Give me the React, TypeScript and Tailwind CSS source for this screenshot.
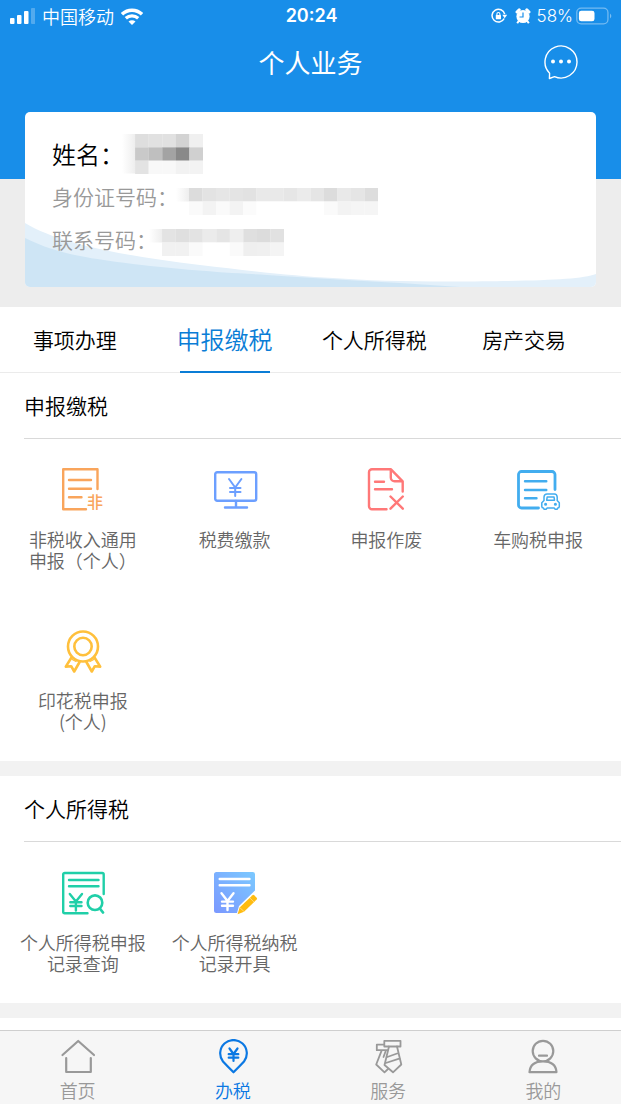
import type { ReactNode } from "react";

type Item = { label: string; icon: ReactNode };

const stroke = {
  fill: "none",
  strokeLinecap: "round" as const,
  strokeLinejoin: "round" as const,
};

function ServiceIcon({ color, width = 2.4, children }: { color: string; width?: number; children: ReactNode }) {
  return (
    <svg viewBox="0 0 44 44" className="h-11 w-11 overflow-visible" stroke={color} strokeWidth={width} {...stroke} aria-hidden="true">
      {children}
    </svg>
  );
}

const declarationItems: Item[] = [
  {
    label: "非税收入通用\n申报（个人）",
    icon: (
      <ServiceIcon color="#f9a55c">
        <path d="M36.5 22V2.3H2.2V42.2H25M8 13H30M8 21.7H30M8 30.3H20.5" />
        <text x="26" y="40.8" fontSize="16" fontWeight="500" fill="#f9a55c" stroke="none">
          非
        </text>
      </ServiceIcon>
    ),
  },
  {
    label: "税费缴款",
    icon: (
      <ServiceIcon color="#6c9fff">
        <rect x="2.2" y="5.2" width="41" height="28.5" rx="2" />
        <path d="M23 34V40M12 40.5H34" />
        <path d="M16 12 22.2 20.5 28.4 12M22.2 20.5V29M17 21H27.5M17 25H27.5" strokeWidth="2" />
      </ServiceIcon>
    ),
  },
  {
    label: "申报作废",
    icon: (
      <ServiceIcon color="#ff7878">
        <path d="M38.7 24.5V14.3L27 2.3H8a3 3 0 0 0-3 3V39.2a3 3 0 0 0 3 3H22.5M26.8 2.5V10.5a3.8 3.8 0 0 0 3.8 3.8H38.5M11 14.7H20M11 22.3H28" />
        <path d="M26.5 29.5 38.8 41.7M38.8 29.5 26.5 41.7" />
      </ServiceIcon>
    ),
  },
  {
    label: "车购税申报",
    icon: (
      <ServiceIcon color="#42adef">
        <path d="M39 22.5V7.5a3 3 0 0 0-3-3H5.5a3 3 0 0 0-3 3V38a3 3 0 0 0 3 3H22.5" strokeWidth="2.8" />
        <path d="M9 14.3H30.3M9 23H30.3M9 31.3H20.5" />
        <g strokeWidth="1.5">
          <path d="M28 33.5V30Q28.3 26.9 31 26.9H38.4Q41 26.9 41.2 30V33.5L43.3 35.7V39.5Q43.3 41 41.7 41.1L41.2 42.2H39L38.3 41.1H31L30.3 42.2H28L27.5 41.1Q25.8 41 25.8 39.5V35.7Z" />
          <path d="M30.7 33.2 31.2 29.9H38L38.5 33.2Z" />
          <circle cx="29.6" cy="37.2" r=".8" />
          <circle cx="39.4" cy="37.2" r=".8" />
        </g>
      </ServiceIcon>
    ),
  },
  {
    label: "印花税申报\n(个人)",
    icon: (
      <ServiceIcon color="#ffc03c" width={2.6}>
        <circle cx="22" cy="18.5" r="15" />
        <circle cx="22" cy="18.5" r="8.7" />
        <path d="M10.5 29.5 4.8 38.6 10.2 38.2 13.2 43.5 18.6 34M33.5 29.5 39.2 38.6 33.8 38.2 30.8 43.5 25.4 34" />
        <path d="M11.2 31.5 15 33.5M32.8 31.5 29 33.5" strokeWidth="1.3" />
      </ServiceIcon>
    ),
  },
];

const incomeItems: Item[] = [
  {
    label: "个人所得税申报\n记录查询",
    icon: (
      <ServiceIcon color="#20cfa8">
        <path d="M42.7 24V4.5a1.5 1.5 0 0 0-1.5-1.5H3.7a1.5 1.5 0 0 0-1.5 1.5V41.7a1.5 1.5 0 0 0 1.5 1.5H26.5M8 10H37.5M8 16.3H37.5" />
        <path d="M8.8 24 14.9 31.5 21 24M14.9 31.5V40.5M9.3 32.2H20.5M9.3 36H20.5" />
        <circle cx="34" cy="32.7" r="7.3" strokeWidth="2.6" />
        <path d="M38.8 38.5 42 42.5" strokeWidth="2.8" />
      </ServiceIcon>
    ),
  },
  {
    label: "个人所得税纳税\n记录开具",
    icon: (
      <ServiceIcon color="#ffffff">
        <defs>
          <linearGradient id="paper" x1="0" y1="1" x2="1" y2="0">
            <stop offset="0" stopColor="#7b98ff" />
            <stop offset="1" stopColor="#7bc9ff" />
          </linearGradient>
        </defs>
        <path d="M3.5 2H39.8a2.2 2.2 0 0 1 2.2 2.2V20.5L26 36 24 43H3.5A2.5 2.5 0 0 1 1 40.5V4.5A2.5 2.5 0 0 1 3.5 2Z" fill="url(#paper)" stroke="none" />
        <path d="M6.7 9H36.5M6.7 15.3H36.5M8.5 23.2 14.5 31 20.5 23.2M14.5 31V40M9 31.6H20M9 35.7H20" />
        <path d="M39.5 25.2Q40.3 24.5 41.1 25.2L43.7 27.8Q44.4 28.7 43.7 29.5L31 41.8 24.6 44.2 26.6 37.5Z" fill="#ffbc11" stroke="none" />
        <path d="M36.7 27.8 41.2 32.2M27 37.8 31 41.5" strokeWidth=".6" strokeOpacity=".7" />
      </ServiceIcon>
    ),
  },
];

const tabs = ["事项办理", "申报缴税", "个人所得税", "房产交易"];

const navItems: { label: string; icon: ReactNode }[] = [
  { label: "首页", icon: <path d="M2.5 16 18.2 2 34 16M6.2 19V33H30.8V19" /> },
  {
    label: "办税",
    icon: (
      <>
        <path d="M18.5 33.3Q12 26.8 8 22.5A13.3 13.3 0 1 1 29 22.5Q25 26.8 18.5 33.3Z" />
        <path d="M14.5 9.5 18.5 15 22.5 9.5M18.5 15V22M13.7 15.2H23.3M13.7 18.7H23.3" />
      </>
    ),
  },
  {
    label: "服务",
    icon: (
      <g strokeWidth="1.8">
        <path d="M14.3 1.8H30.5V7.5H14.3ZM14.3 5.7H6.8V11.2H17.5M11.8 11.2 6.2 25.5 14.5 33.3 18 30M16 11.2 13.5 18" />
        <path d="M19 7.5 14.5 26 23 33.3 31.3 25.5 27 7.5M17.3 18 28.5 14M15.8 24 30 19.3" />
      </g>
    ),
  },
  {
    label: "我的",
    icon: <path d="M18 1.8A10.3 10.3 0 1 1 18 22.4A10.3 10.3 0 1 1 18 1.8ZM14 16.7H22M4.5 33.2Q5.3 22.4 18 22.4T31.5 33.2Z" />,
  },
];

function Mosaic({ rows, className, lead }: { rows: string[][]; className: string; lead: string }) {
  const columns = rows[0].length;
  return (
    <svg viewBox={`-13 0 ${columns * 13.5 + 13} ${rows.length * 13.5}`} preserveAspectRatio="none" className={className} role="img" aria-label="已隐藏">
      <defs>
        <linearGradient id={lead}>
          <stop offset="0" stopColor="#eeeeee" stopOpacity="0" />
          <stop offset="1" stopColor="#eeeeee" />
        </linearGradient>
      </defs>
      <rect x="-13" y="0" width="13" height={rows.length > 2 ? 40 : 13.5} fill={`url(#${lead})`} />
      {rows.map((row, y) =>
        row.map((fill, x) => <rect key={`${x}-${y}`} x={x * 13.5} y={y * 13.5} width="13.6" height="13.6" fill={fill} />)
      )}
    </svg>
  );
}

const nameRows = [
  ["#dedede", "#e1e1e1", "#e1e1e1", "#d3d3d3", "#f0f0f0"],
  ["#c9c9c9", "#bfbfbf", "#a3a3a3", "#898989", "#d0d0d0"],
  ["#e3e3e3", "#f8f8f8", "#f8f8f8", "#f2f2f2", "#f3f3f3"],
];
const idRows = [
  ["#dcdcdc", "#e3e3e3", "#e6e6e6", "#e4e4e4", "#e2e2e2", "#e9e9e9", "#e9e9e9", "#e6e6e6", "#ebebeb", "#e5e5e5", "#dcdcdc", "#e9e9e9", "#e5e5e5", "#dddddd"],
  ["#fafafa", "#f3f3f3", "#fafafa", "#f3f3f3", "#fbfbfb", "#fff", "#fff", "#fff", "#fff", "#fff", "#fafafa", "#f3f3f3", "#f5f5f5", "#f5f5f5"],
];
const phoneRows = [
  ["#e3e3e3", "#dfdfdf", "#e3e3e3", "#ebebeb", "#e5e5e5", "#eeeeee", "#dfdfdf", "#dcdcdc", "#e1e1e1"],
  ["#f1f1f1", "#f1f1f1", "#fafafa", "#fff", "#fff", "#fafafa", "#efefef", "#f0f0f0", "#f4f4f4"],
];

function StatusBar() {
  return (
    <div className="grid h-8 grid-cols-[1fr_auto_1fr] items-center pr-2 pl-[10px] text-lg leading-8">
      <div className="flex items-center gap-[7px]">
        <svg viewBox="0 0 25 16" className="h-4 w-[25px]" fill="white" aria-hidden="true">
          <rect x="0" y="10" width="4.5" height="6" rx="1" />
          <rect x="7" y="7" width="4.5" height="9" rx="1" />
          <rect x="14" y="3" width="4.5" height="13" rx="1" />
          <rect x="21" y="0" width="4.3" height="16" rx="1" opacity=".25" />
        </svg>
        <span className="leading-[30px]">中国移动</span>
        <svg viewBox="0 0 22 17" className="h-[17px] w-[22px]" fill="none" stroke="white" strokeWidth="3.4" aria-hidden="true">
          <path d="M1 6.2A14.6 14.6 0 0 1 21 6.2M4.8 10.2A9.4 9.4 0 0 1 17.2 10.2" />
          <path d="M11 17 7.5 13.6A5 5 0 0 1 14.5 13.6Z" fill="white" stroke="none" />
        </svg>
      </div>
      <time className="font-[Inter,sans-serif] font-semibold">20:24</time>
      <div className="flex items-center justify-end">
        <svg viewBox="0 0 16 16" className="mr-2 h-4 w-4" fill="none" stroke="white" strokeWidth="1.5" aria-hidden="true">
          <path d="M13.2 10.5A6.4 6.4 0 1 1 13.7 6.2" />
          <path d="M11.3 6.8H16.2L13.7 10.2Z" fill="white" stroke="none" />
          <rect x="4.8" y="7" width="5.2" height="4.3" rx=".5" fill="white" stroke="none" />
          <path d="M5.9 7.5V6a1.5 1.5 0 0 1 3 0V7.5" strokeWidth="1.1" />
        </svg>
        <svg viewBox="0 0 16 16" className="mr-[6px] h-4 w-4" aria-hidden="true">
          <circle cx="8" cy="8.5" r="6.6" fill="white" />
          <path d="M2 4 4.2 1.8M11.8 1.8 14 4" stroke="white" strokeWidth="3" strokeLinecap="round" />
          <path d="M3.7 13 2.2 15.2M12.3 13 13.8 15.2" stroke="white" strokeWidth="2" />
          <path d="M8 4.5V9H4.5" fill="none" stroke="#188ee9" strokeWidth="1.2" />
        </svg>
        <span className="font-[Inter,sans-serif] text-[17px]">58%</span>
        <svg viewBox="0 0 38 18" className="ml-[3px] h-[18px] w-[37px]" fill="none" aria-hidden="true">
          <rect x=".8" y="1" width="32" height="16" rx="4.5" stroke="white" strokeOpacity=".4" strokeWidth="1.3" />
          <rect x="3" y="3.5" width="16" height="11" rx="2.5" fill="white" />
          <path d="M35 6.5Q37.5 9 35 11.5Z" fill="white" fillOpacity=".45" />
        </svg>
      </div>
    </div>
  );
}

function ProfileCard() {
  return (
    <section className="relative mx-[25px] mt-5 h-[175px] overflow-hidden rounded-[5px] bg-white px-[27px] pt-[22px]">
      <svg viewBox="0 0 571 175" preserveAspectRatio="none" className="absolute inset-0 h-full w-full" aria-hidden="true">
        <path d="M0 111C35 132 95 143 175 153C225 159 270 164 308 166Q355 169.5 425 169.5C510 169 555 168 571 162V175H0Z" fill="#e3f0fa" />
        <path d="M0 126C30 141 60 146 108 152C160 158 190 160 242 163Q300 167 375 171L435 175H0Z" fill="#cee5f5" />
      </svg>
      <dl className="relative">
        <div className="flex h-10 items-center text-2xl text-black">
          <dt>姓名：</dt>
          <dd className="-ml-[2px]">
            <Mosaic rows={nameRows} lead="leadName" className="h-10 w-[81px]" />
          </dd>
        </div>
        <div className="flex h-[46px] items-center text-[21px] text-[#999]">
          <dt>身份证号码：</dt>
          <dd className="mt-2 -ml-[2px]">
            <Mosaic rows={idRows} lead="leadId" className="h-[27px] w-[202px]" />
          </dd>
        </div>
        <div className="flex h-[40px] items-center text-[21px] text-[#999]">
          <dt>联系号码：</dt>
          <dd className="mt-1 -ml-2">
            <Mosaic rows={phoneRows} lead="leadPhone" className="h-[27px] w-[135px]" />
          </dd>
        </div>
      </dl>
    </section>
  );
}

function ServiceSection({ title, items }: { title: string; items: Item[] }) {
  return (
    <section className="bg-white">
      <h2 className="ml-6 h-[66px] border-b border-[#d9d9d9] text-[21px] leading-[65px] font-[350] text-black">{title}</h2>
      <ul className="grid grid-cols-4 px-[7px]">
        {items.map((item) => (
          <li key={item.label} className="h-[161px]">
            <button type="button" className="flex w-full flex-col items-center gap-[18px] pt-7 text-lg leading-[21px] font-[350] text-[#666]">
              {item.icon}
              <span className="whitespace-pre">{item.label}</span>
            </button>
          </li>
        ))}
      </ul>
    </section>
  );
}

export default function App() {
  return (
    <div className="flex min-h-screen flex-col bg-white font-['Noto_Sans_CJK_SC',sans-serif] font-[350]">
      <header className="bg-[linear-gradient(#188ee9_179px,#ededed_179px)] pb-5 text-white">
        <StatusBar />
        <div className="grid h-[60px] grid-cols-[1fr_auto_1fr] items-center px-[42px]">
          <h1 className="col-start-2 text-[26px] leading-[60px] font-normal">个人业务</h1>
          <button type="button" aria-label="消息" className="justify-self-end">
            <svg viewBox="0 0 36 36" className="h-9 w-9" fill="none" stroke="white" strokeWidth="1.4" strokeLinejoin="round" aria-hidden="true">
              <path d="M6.6 29.2A16 16 0 1 1 11.5 32.6L6.4 34.5Z" />
              <g fill="white" stroke="none">
                <circle cx="10" cy="17.5" r="2" />
                <circle cx="18" cy="17.5" r="2" />
                <circle cx="26" cy="17.5" r="2" />
              </g>
            </svg>
          </button>
        </div>
        <ProfileCard />
      </header>

      <div role="tablist" className="grid h-[66px] grid-cols-4 border-b border-[#ebebeb] bg-white pr-[22px] text-[21px] text-black">
        {tabs.map((tab) =>
          tab === "申报缴税" ? (
            <button key={tab} type="button" role="tab" aria-selected="true" className="mx-auto flex h-[66px] w-[90px] items-center justify-center border-b-2 border-[#0a7dd6] text-2xl whitespace-nowrap text-[#0a7dd6]">
              {tab}
            </button>
          ) : (
            <button key={tab} type="button" role="tab" aria-selected="false" className="flex h-[66px] items-center justify-center whitespace-nowrap">
              {tab}
            </button>
          )
        )}
      </div>

      <main className="flex-1 bg-[#f2f2f2]">
        <div className="flex flex-col gap-[15px]">
          <ServiceSection title="申报缴税" items={declarationItems} />
          <ServiceSection title="个人所得税" items={incomeItems} />
          <div className="h-3 bg-white" />
        </div>
      </main>

      <nav className="sticky bottom-0 grid h-[74px] grid-cols-4 border-t border-[#cfcfcf] bg-[#f6f6f6]">
        {navItems.map(({ label, icon }) => (
          <a
            key={label}
            href="#"
            aria-current={label === "办税" ? "page" : undefined}
            className="flex flex-col items-center gap-1 pt-2 text-lg leading-[23px] text-[#999] aria-[current=page]:text-[#0b78e3]"
          >
            <svg viewBox="0 0 36 36" className="h-9 w-9" stroke="currentColor" strokeWidth="2.2" {...stroke} aria-hidden="true">
              {icon}
            </svg>
            {label}
          </a>
        ))}
      </nav>
    </div>
  );
}
